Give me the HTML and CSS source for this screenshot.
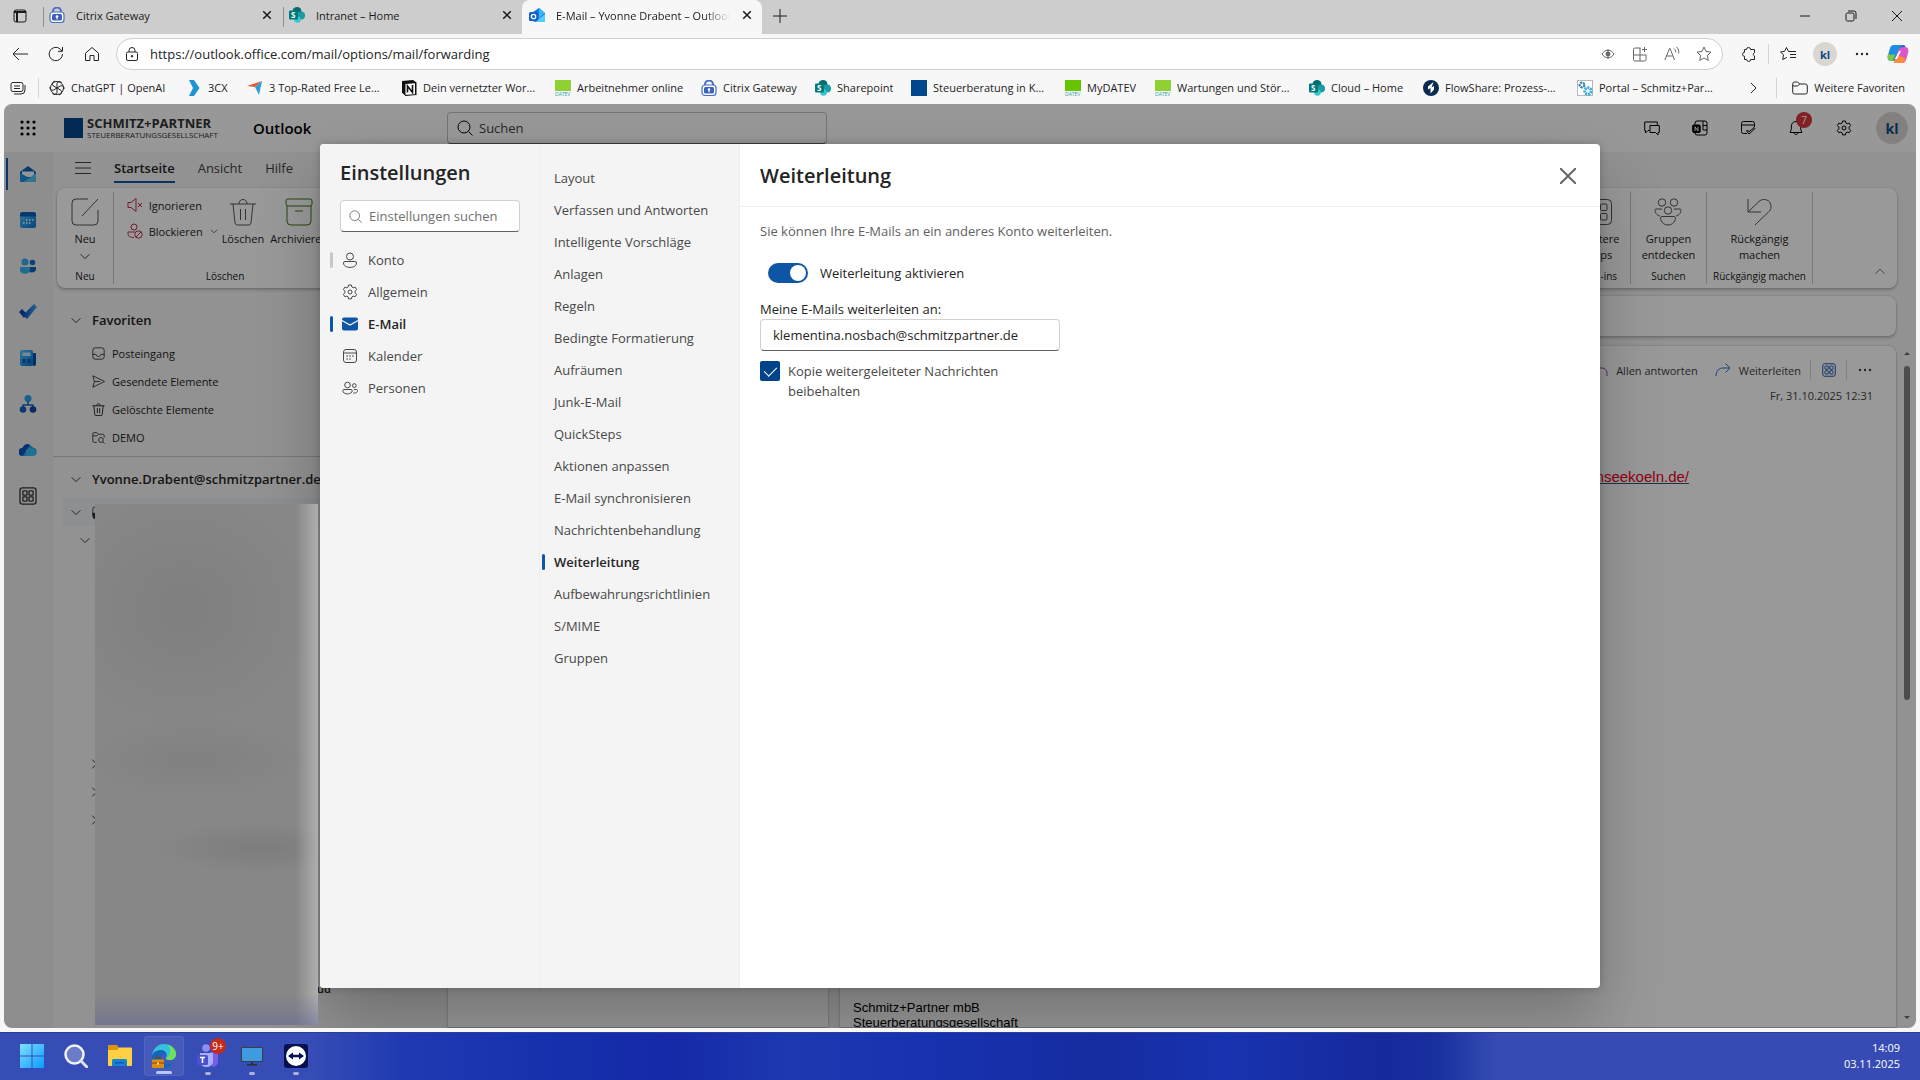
FILE: index.html
```html
<!DOCTYPE html>
<html lang="de">
<head>
    <meta charset="UTF-8">
    <meta name="viewport" content="width=device-width, initial-scale=1.0">
    <title>E-Mail – Yvonne Drabent – Outlook</title>
    <link rel="stylesheet" href="styles.css">
</head>
<body>
    <!-- shared icons -->
    <svg class="sprite" aria-hidden="true">
        <linearGradient id="g-sky" x1="0" y1="0" x2="1" y2="1"><stop offset="0" stop-color="#4fc8ff"/><stop offset="1" stop-color="#0a6fd6"/></linearGradient>
        <linearGradient id="g-deep" x1="0" y1="0" x2="1" y2="0"><stop offset="0" stop-color="#0b53c4"/><stop offset="1" stop-color="#34a8f0"/></linearGradient>
        <symbol id="i-x" viewBox="0 0 16 16"><path d="M3 3l10 10M13 3L3 13"/></symbol>
        <symbol id="i-down" viewBox="0 0 16 16"><path d="M3 6l5 5 5-5"/></symbol>
        <symbol id="i-right" viewBox="0 0 16 16"><path d="M6 3l5 5-5 5"/></symbol>
        <symbol id="i-search" viewBox="0 0 16 16"><circle cx="7" cy="7" r="6"/><path d="M11.500 11.500L15.500 15.500"/></symbol>
        <symbol id="i-gear" viewBox="0 0 16 16"><circle cx="8" cy="8" r="2"/><path d="M6.600 1h2.800l.5 2 1.300.8 2-.6 1.400 2.400-1.500 1.500v1.700l1.500 1.500-1.400 2.400-2-.6-1.300.8-.5 2H6.600l-.5-2-1.300-.8-2 .6-1.400-2.400 1.500-1.500V7.100L1.400 5.600l1.400-2.400 2 .6L6.100 3z" stroke-linejoin="round"/></symbol>
        <symbol id="i-person" viewBox="0 0 16 16"><circle cx="8" cy="4.500" r="3.500"/><path d="M3 9.500h10a1.500 1.500 0 0 1 1.500 1.500c0 2.700-2.600 4.400-6.500 4.400S1.500 13.700 1.500 11A1.500 1.500 0 0 1 3 9.500z"/></symbol>
        <symbol id="i-people" viewBox="0 0 16 16"><circle cx="5.500" cy="5" r="2.800"/><circle cx="12.300" cy="5.600" r="1.900"/><path d="M1.800 9.500h7.400c.6 0 1 .5 1 1 0 2.100-1.900 3.400-4.700 3.400S.8 12.600.8 10.500c0-.5.400-1 1-1zM11.800 9.500h2.700c.6 0 1 .4 1 1 0 1.600-1.200 2.600-3.200 2.600-.4 0-.8 0-1.100-.1"/></symbol>
        <symbol id="i-cal" viewBox="0 0 16 16"><rect x="1.500" y="1.500" width="13" height="13" rx="2.500"/><path d="M1.500 5h13"/><path d="M4.500 8h1.200M7.400 8h1.200M10.300 8h1.200M4.500 11h1.200M7.400 11h1.200" stroke-width="1.500"/></symbol>
        <symbol id="i-trash" viewBox="0 0 28 28"><path d="M1 6h26M10 6c0-6 8-6 8 0M4 6l2 19a2.500 2.500 0 0 0 2.500 2h11a2.500 2.500 0 0 0 2.500-2l2-19M11.500 11v11M16.500 11v11"/></symbol>
        <symbol id="i-apps" viewBox="0 0 28 28"><rect x="1.500" y="1.500" width="25" height="25" rx="4"/><rect x="6" y="6" width="6.500" height="6.500" rx="1"/><rect x="15.500" y="6" width="6.500" height="6.500" rx="1"/><rect x="6" y="15.500" width="6.500" height="6.500" rx="1"/><rect x="15.500" y="15.500" width="6.500" height="6.500" rx="1"/></symbol>
        <symbol id="i-dots" viewBox="0 0 16 16"><g fill="currentColor" stroke="none"><circle cx="3" cy="8" r="1.200"/><circle cx="8" cy="8" r="1.200"/><circle cx="13" cy="8" r="1.200"/></g></symbol>
        <symbol id="i-star" viewBox="0 0 16 16"><path d="M8 1l2.100 4.500 4.900.6-3.600 3.400.9 4.900L8 12l-4.300 2.400.9-4.900L1 6.100l4.900-.6z" stroke-linejoin="round"/></symbol>
        <symbol id="i-citrix" viewBox="0 0 16 16"><path d="M4 6V4.500a4 4 0 0 1 8 0V6" fill="none" stroke="#4a6fc0" stroke-width="2"/><rect x="1" y="5" width="14" height="10.500" rx="3" fill="#fff" stroke="#4a6fc0" stroke-width="1.200"/><rect x="3" y="7" width="10" height="6.500" rx="1.500" fill="#3c62b8"/><circle cx="8" cy="9.500" r="1.300" fill="#fff"/><path d="M7.500 10h1v2.500h-1z" fill="#fff"/></symbol>
        <symbol id="i-sp" viewBox="0 0 16 16"><circle cx="8" cy="4.500" r="4.500" fill="#036c70"/><circle cx="12" cy="8.500" r="4" fill="#1a9ba1"/><circle cx="8.500" cy="12.500" r="3.300" fill="#37c6d0"/><rect y="3.500" width="9" height="9" rx="1" fill="#03787c"/></symbol>
    </svg>

    <header class="titlebar">
        <button class="icon-btn tab-menu" aria-label="Menü für Tabaktionen"><svg class="ic" viewBox="0 0 16 16"><rect x="2" y="2" width="12" height="12" rx="2"/><path d="M2 4h12M5 4v10" stroke-width="2"/></svg></button>
        <div class="tab"><svg class="ic fill"><use href="#i-citrix"/></svg><span class="tab-title">Citrix Gateway</span><button class="tab-close" aria-label="Tab schließen"><svg class="ic"><use href="#i-x"/></svg></button></div>
        <div class="tab"><svg class="ic fill" viewBox="0 0 16 16"><use href="#i-sp"/><text x="2" y="11" class="sp-letter">S</text></svg><span class="tab-title">Intranet – Home</span><button class="tab-close" aria-label="Tab schließen"><svg class="ic"><use href="#i-x"/></svg></button></div>
        <div class="tab active">
            <svg class="ic fill" viewBox="0 0 16 16"><path d="M4 5l6-4 6 5v7a2 2 0 0 1-2 2H6a2 2 0 0 1-2-2z" fill="#1b74e4"/><path d="M10 1l6 5-6 5z" fill="#35b8f5"/><path d="M16 7v6a2 2 0 0 1-2 2H6z" fill="#4fd0ff"/><rect y="5" width="9" height="9" rx="1.500" fill="#0f5fd0"/><circle cx="4.500" cy="9.500" r="2.200" fill="none" stroke="#fff" stroke-width="1.300"/></svg>
            <span class="tab-title">E-Mail – Yvonne Drabent – Outlook</span><button class="tab-close" aria-label="Tab schließen"><svg class="ic"><use href="#i-x"/></svg></button>
        </div>
        <button class="icon-btn" aria-label="Neuer Tab"><svg class="ic" viewBox="0 0 16 16"><path d="M8 1v14M1 8h14"/></svg></button>
        <div class="window-controls">
            <button aria-label="Minimieren"><svg class="ic" viewBox="0 0 16 16"><path d="M3 8h10"/></svg></button>
            <button aria-label="Verkleinern"><svg class="ic" viewBox="0 0 16 16"><rect x="3" y="5" width="8" height="8" rx="1.500"/><path d="M5 3h6a2 2 0 0 1 2 2v6"/></svg></button>
            <button aria-label="Schließen"><svg class="ic"><use href="#i-x"/></svg></button>
        </div>
    </header>

    <div class="toolbar">
        <button class="icon-btn" aria-label="Zurück"><svg class="ic" viewBox="0 0 16 16"><path d="M16 8H1M7 2L1 8l6 6"/></svg></button>
        <button class="icon-btn" aria-label="Aktualisieren"><svg class="ic" viewBox="0 0 16 16"><path d="M14.500 8A6.700 6.700 0 1 1 12 2.800L14 5M14.500 1v4.300H10"/></svg></button>
        <button class="icon-btn" aria-label="Startseite"><svg class="ic" viewBox="0 0 16 16"><path d="M1.500 7.200L8 1.500l6.500 5.700v7.300H10V9.500H6v5H1.500z" stroke-linejoin="round"/></svg></button>
        <div class="address">
            <svg class="ic" viewBox="0 0 16 16"><rect x="2.500" y="6" width="11" height="8.500" rx="1.500"/><path d="M5 6V4.500a3 3 0 0 1 6 0V6"/><circle cx="8" cy="10.200" r=".8" fill="currentColor"/></svg>
            <input type="text" aria-label="Adresse" value="https://outlook.office.com/mail/options/mail/forwarding">
            <div class="address-tools">
                <svg class="ic" viewBox="0 0 16 16"><path d="M2 8c3-5 9-5 12 0-3 5-9 5-12 0z"/><circle cx="8" cy="8" r="2" fill="currentColor"/><path d="M8 3v10"/></svg>
                <svg class="ic" viewBox="0 0 16 16"><path d="M8.500 2H3a1.500 1.500 0 0 0-1.500 1.500v10A1.500 1.500 0 0 0 3 15h9.500a1.500 1.500 0 0 0 1.500-1.500V9H1.500M8 2v13M12.500 1v5M10 3.500h5"/></svg>
                <svg class="ic" viewBox="0 0 16 16"><path d="M.8 14L5.500 2.500h.6L10.500 14M2.500 10h6.300M10 2.500c1.300 1 1.800 2.500 1.500 4M12.500 1c1.900 1.600 2.700 4 2.200 6.500"/></svg>
                <svg class="ic"><use href="#i-star"/></svg>
            </div>
        </div>
        <div class="toolbar-right">
            <button class="icon-btn" aria-label="Erweiterungen"><svg class="ic" viewBox="0 0 16 16"><path d="M5.500 3.500a2 2 0 0 1 4 0h4v3.200a1.800 1.800 0 0 0 0 3.400v3.400H9.700a2 2 0 0 1-4 0H3.500v-3.200a2 2 0 0 1 0-4V3.500z" stroke-linejoin="round"/></svg></button>
            <span class="sep"></span>
            <button class="icon-btn" aria-label="Favoriten"><svg class="ic" viewBox="0 0 16 16"><path d="M11 5.500H8.500L6.500 1.500l-2 3.900-4 .5 3 3-.8 4.600 4-2M10 8.500h6M10 5.500h6M10 11.500h6"/></svg></button>
            <button class="avatar small" aria-label="Profil">kl</button>
            <button class="icon-btn" aria-label="Einstellungen und mehr"><svg class="ic"><use href="#i-dots"/></svg></button>
            <button class="icon-btn" aria-label="Copilot"><svg class="copilot" viewBox="0 0 22 22"><path d="M7 2h8l-4 12c-1 3-2 4-5 4H4c-3 0-4-3-3-6l2-7c.7-2 2-3 4-3z" fill="#1a8fe3"/><path d="M1 11c2 1 5 1 7 0l-2 7H4c-3 0-4-3-3-7z" fill="#7ac943"/><path d="M15 2l3 .5 1 4-7 .5z" fill="#1a55d0"/><path d="M15 20H7l4-12c1-3 2-4 5-4h2c3 0 4 3 3 6l-2 7c-.7 2-2 3-4 3z" fill="#d957c8"/><path d="M7 20l2-7c3-1 7 0 10 4-1 2-2 3-4 3z" fill="#ff8b3d"/><path d="M12 8h2l-4 8H8z" fill="#fff"/></svg></button>
        </div>
    </div>

    <nav class="bookmarks" aria-label="Favoritenleiste">
        <button class="icon-btn" aria-label="Arbeitsbereiche"><svg class="ic" viewBox="0 0 16 16"><rect x="1" y="2.500" width="12" height="9" rx="2"/><path d="M4 6h6M4 8.500h6M15 5v5a4 4 0 0 1-4 4H4"/></svg></button>
        <span class="sep"></span>
        <a href="#" class="w-137"><svg class="ic" viewBox="0 0 16 16"><path d="M8 8V3.500A2.700 2.700 0 0 1 12.700 2.500M8 8l4-2.300a2.700 2.700 0 0 1 3 3.300M8 8l4 2.300a2.700 2.700 0 0 1-2.200 4.500M8 8v4.500a2.700 2.700 0 0 1-4.700 1M8 8l-4 2.300A2.700 2.700 0 0 1 1 7M8 8L4 5.700A2.700 2.700 0 0 1 6.200 1.200"/><circle cx="8" cy="8" r="6.500"/></svg><span>ChatGPT | OpenAI</span></a>
        <a href="#" class="w-61"><svg class="ic fill" viewBox="0 0 16 16"><path d="M3 0h5l5.500 8L8 16H3l4-8z" fill="#1d93d8"/></svg><span>3CX</span></a>
        <a href="#" class="w-154"><svg class="ic fill" viewBox="0 0 16 16"><path d="M0 6l15-5-7 6z" fill="#e8582a"/><path d="M15 1l-3 14-4-8z" fill="#2a9fd8"/></svg><span>3 Top-Rated Free Leads</span></a>
        <a href="#" class="w-154"><svg class="ic fill" viewBox="0 0 16 16"><path d="M1 1l11-1 3.500 2.500V15l-11 1L1 12.500z" fill="#111"/><path d="M4.500 4L14 3.300v10.900l-9.500.6z" fill="#fff"/><path d="M6.500 12.500V6l5 6.500V5" fill="none" stroke="#111" stroke-width="1.600"/></svg><span>Dein vernetzter Workspace</span></a>
        <a href="#" class="w-146"><svg class="ic fill" viewBox="0 0 16 16"><path d="M0 0h16v11H0z" fill="#8fd032"/><text x="0" y="16" class="datev">DATEV</text></svg><span>Arbeitnehmer online</span></a>
        <a href="#" class="w-114"><svg class="ic fill"><use href="#i-citrix"/></svg><span>Citrix Gateway</span></a>
        <a href="#" class="w-96"><svg class="ic fill" viewBox="0 0 16 16"><use href="#i-sp"/><text x="2" y="11" class="sp-letter">S</text></svg><span>Sharepoint</span></a>
        <a href="#" class="w-154"><svg class="ic fill" viewBox="0 0 16 16"><path d="M0 0h16v16H0z" fill="#00468c"/></svg><span>Steuerberatung in Köln</span></a>
        <a href="#" class="w-90"><svg class="ic fill" viewBox="0 0 16 16"><path d="M0 0h16v11H0z" fill="#68c400"/><text x="0" y="16" class="datev">DATEV</text></svg><span>MyDATEV</span></a>
        <a href="#" class="w-154"><svg class="ic fill" viewBox="0 0 16 16"><path d="M0 0h16v11H0z" fill="#8fd032"/><text x="0" y="16" class="datev">DATEV</text></svg><span>Wartungen und Störungen</span></a>
        <a href="#" class="w-114"><svg class="ic fill" viewBox="0 0 16 16"><use href="#i-sp"/><text x="2" y="11" class="sp-letter">S</text></svg><span>Cloud – Home</span></a>
        <a href="#" class="w-154"><svg class="ic fill" viewBox="0 0 16 16"><circle cx="8" cy="8" r="8" fill="#0a2a52"/><path d="M10.500 2L5 6.500v3L7.500 8v5.500l3.500-4V6L8.500 7.500z" fill="#fff"/></svg><span>FlowShare: Prozess-Doku</span></a>
        <a href="#" class="w-154"><svg class="ic fill" viewBox="0 0 16 16"><rect x=".5" y=".5" width="15" height="15" fill="#fff" stroke="#b8b8b8"/><circle cx="5" cy="5" r="2.400" fill="none" stroke="#1a7aa8" stroke-width="2" stroke-dasharray="2 .8"/><circle cx="11" cy="11" r="3.200" fill="none" stroke="#38a9e0" stroke-width="3" stroke-dasharray="2 .8"/></svg><span>Portal – Schmitz+Partner</span></a>
        <div class="bookmarks-end">
            <button class="icon-btn" aria-label="Weitere anzeigen"><svg class="ic"><use href="#i-right"/></svg></button>
            <span class="sep"></span>
            <a href="#"><svg class="ic" viewBox="0 0 16 16"><path d="M.7 4a2 2 0 0 1 2-2h3l2 2h5.600a2 2 0 0 1 2 2v6a2 2 0 0 1-2 2H2.700a2 2 0 0 1-2-2zM.7 6h5l2-2"/></svg><span>Weitere Favoriten</span></a>
        </div>
    </nav>

    <div class="page">
        <div class="suite-header">
            <button class="waffle" aria-label="App-Startfeld"><svg class="ic fill" viewBox="0 0 16 16"><g fill="#000"><circle cx="2" cy="2" r="1.600"/><circle cx="8" cy="2" r="1.600"/><circle cx="14" cy="2" r="1.600"/><circle cx="2" cy="8" r="1.600"/><circle cx="8" cy="8" r="1.600"/><circle cx="14" cy="8" r="1.600"/><circle cx="2" cy="14" r="1.600"/><circle cx="8" cy="14" r="1.600"/><circle cx="14" cy="14" r="1.600"/></g></svg></button>
            <div class="brand">
                <span class="brand-mark"></span>
                <span class="brand-text"><b>SCHMITZ+PARTNER</b><small>STEUERBERATUNGSGESELLSCHAFT</small></span>
            </div>
            <span class="app-name">Outlook</span>
            <label class="suite-search"><svg class="ic"><use href="#i-search"/></svg><input type="text" aria-label="Suchen" placeholder="Suchen"></label>
            <div class="suite-tools">
                <button aria-label="Teams-Chat"><svg class="ic" viewBox="0 0 16 16"><path d="M5.500 10.500H4L1.500 13v-2.500H.7V2h12.600v3M6 5.500h9.300v7H14V15l-2.500-2.500H6z"/></svg></button>
                <button aria-label="OneNote"><svg class="ic" viewBox="0 0 16 16"><rect x="3" y="1" width="12" height="14" rx="2"/><path d="M11 5.500h4M11 10h4M11 1v9"/><rect x=".7" y="5" width="7.500" height="7.500" rx="1" fill="currentColor"/><path d="M3 11V6.800L6 11V6.800" stroke="#fff"/></svg></button>
                <button aria-label="Mein Tag"><svg class="ic" viewBox="0 0 16 16"><path d="M7 13.500H3.500a2 2 0 0 1-2-2v-8a2 2 0 0 1 2-2h9a2 2 0 0 1 2 2V7M1.500 5h13M6.500 11l2.500 3 6-5.500-1-1-5 4.300-1.500-1.800z"/></svg></button>
                <button aria-label="Benachrichtigungen" class="bell"><svg class="ic" viewBox="0 0 16 16"><path d="M8 1.500A4.700 4.700 0 0 0 3.300 6v3.500L2 12.500h12l-1.300-3V6A4.700 4.700 0 0 0 8 1.500zM6 12.500c0 2.700 4 2.700 4 0"/></svg><span class="badge">7</span></button>
                <button aria-label="Einstellungen"><svg class="ic"><use href="#i-gear"/></svg></button>
                <button class="avatar" aria-label="Konto">kl</button>
            </div>
        </div>

        <div class="workspace">
            <nav class="rail" aria-label="Apps">
                <a href="#" class="active" aria-label="E-Mail"><svg viewBox="0 0 18 18"><path d="M1 7l8-6 8 6v8a2 2 0 0 1-2 2H3a2 2 0 0 1-2-2z" fill="#0f5fb8"/><path d="M3 6.500h12V12H3z" fill="#f4fbff"/><path d="M1 8l16 8.500a2 2 0 0 1-2 .5H3a2 2 0 0 1-2-2z" fill="#1f8fe0"/><path d="M17 8L5 17h10a2 2 0 0 0 2-2z" fill="#4cc6f2"/></svg></a>
                <a href="#" aria-label="Kalender"><svg viewBox="0 0 18 18"><rect x="1" y="1" width="16" height="16" rx="2.500" fill="url(#g-sky)"/><path d="M1 5.500v-2A2.500 2.500 0 0 1 3.500 1h11A2.500 2.500 0 0 1 17 3.500v2z" fill="#0a5fb8"/><path d="M7 9h1.500M10 9h1.500M13 9h1.500M4 12h1.500M7 12h1.500M10 12h1.500" stroke="#fff" stroke-width="1.500"/></svg></a>
                <a href="#" aria-label="Personen"><svg viewBox="0 0 18 18"><circle cx="6" cy="5" r="3.600" fill="#34b0f2"/><circle cx="13.500" cy="5.500" r="2.800" fill="#0f6fd0"/><path d="M10 10h7v2c0 3-3 4-7 3z" fill="#0f62c0"/><path d="M1 10h10v3c0 5-10 5-10 0z" fill="#36b4f2"/></svg></a>
                <a href="#" aria-label="To Do"><svg viewBox="0 0 18 18"><path d="M0 9l3-3 5 5-3 4z" fill="#0d47a0"/><path d="M4 12L15 1l3 3L8 16z" fill="url(#g-deep)"/></svg></a>
                <a href="#" aria-label="Newsletter"><svg viewBox="0 0 18 18"><path d="M13 4h3a1 1 0 0 1 1 1v10a2 2 0 0 1-4 0z" fill="#0b4fa8"/><rect x="1" y="1" width="13" height="16" rx="2" fill="url(#g-sky)"/><path d="M3.500 3.500h8V7h-8z" fill="#bfe8ff"/><path d="M3.500 10h3v4h-3zM8.500 10h3v4h-3z" fill="#0a5cb0"/></svg></a>
                <a href="#" aria-label="Organigramm"><svg viewBox="0 0 18 18"><circle cx="9" cy="3.500" r="3.500" fill="#2ba2ea"/><path d="M9 6v4M4 14v-4h10v4" fill="none" stroke="#1668b8" stroke-width="1.500"/><circle cx="4" cy="14.500" r="3.300" fill="#1060c0"/><circle cx="14" cy="14.500" r="3.300" fill="#0a48a0"/></svg></a>
                <a href="#" aria-label="OneDrive"><svg viewBox="0 0 18 18"><path d="M4 15a4 4 0 0 1-.5-8A6 6 0 0 1 14 6.500a4.300 4.300 0 0 1 0 8.500z" fill="#22a4f0"/><path d="M3.500 15a4 4 0 0 1 0-8C5 3 9 2 11 4z" fill="#0c50c0"/><path d="M7 9c3-3 8-2 9 0 2 3 0 6-2 6H7z" fill="#3cc0f4" opacity=".8"/></svg></a>
                <a href="#" aria-label="Weitere Apps"><svg class="line"><use href="#i-apps"/></svg></a>
            </nav>

            <div class="main">
                <div class="ribbon-tabs">
                    <button class="menu-btn" aria-label="Navigationsbereich"><svg class="ic" viewBox="0 0 16 16"><path d="M0 2.500h16M0 8h16M0 13.500h16"/></svg></button>
                    <a href="#" class="active">Startseite</a><a href="#">Ansicht</a><a href="#">Hilfe</a>
                </div>

                <section class="ribbon card">
                    <div class="ribbon-group g-new">
                        <div class="ribbon-row"><button class="big"><svg class="ic28" viewBox="0 0 28 28"><path d="M17 1H5a4 4 0 0 0-4 4v18a4 4 0 0 0 4 4h18a4 4 0 0 0 4-4V12M11 18L27 1"/></svg>Neu<svg class="ic14"><use href="#i-down"/></svg></button></div>
                        <span class="caption">Neu</span>
                    </div>
                    <div class="ribbon-group g-delete">
                        <div class="ribbon-row">
                            <div class="stack">
                                <button><svg class="ic red" viewBox="0 0 16 16"><path d="M1 5.500h3L9 1.500v13l-5-4H1zM11 6l4 4M15 6l-4 4"/></svg>Ignorieren</button>
                                <button><svg class="ic red" viewBox="0 0 16 16"><circle cx="7" cy="4" r="3"/><path d="M7 14.500c-4 0-6-1.500-6-4V9h7"/><circle cx="11.500" cy="11.500" r="3.700"/><path d="M9 14l5-5"/></svg>Blockieren<svg class="ic10"><use href="#i-down"/></svg></button>
                            </div>
                            <button class="big"><svg class="ic28"><use href="#i-trash"/></svg>Löschen</button>
                            <button class="big"><svg class="ic28 leaf" viewBox="0 0 28 28"><rect x="1" y="1" width="26" height="7" rx="2"/><path d="M2 8v15a4 4 0 0 0 4 4h16a4 4 0 0 0 4-4V8M10 13h8"/></svg>Archivieren</button>
                        </div>
                        <span class="caption">Löschen</span>
                    </div>
                    <div class="ribbon-fill"></div>
                    <div class="ribbon-group g-addins">
                        <div class="ribbon-row"><button class="big"><svg class="ic28"><use href="#i-apps"/></svg>Weitere<br>Apps</button></div>
                        <span class="caption">Add-ins</span>
                    </div>
                    <div class="ribbon-group g-groups">
                        <div class="ribbon-row"><button class="big"><svg class="ic28" viewBox="0 0 28 28"><circle cx="8" cy="4.500" r="3.700"/><circle cx="20" cy="4.500" r="3.700"/><circle cx="14" cy="12.500" r="3.700"/><path d="M8 11H2c-2 0-1 6 4 7M20 11h6c2 0 1 6-4 7M7.500 18.500h13c2 0 1 8.500-6.500 8.500s-8.500-8.500-6.500-8.500z"/></svg>Gruppen<br>entdecken</button></div>
                        <span class="caption">Suchen</span>
                    </div>
                    <div class="ribbon-group g-undo">
                        <div class="ribbon-row"><button class="big"><svg class="ic28" viewBox="0 0 28 28"><path d="M3 1v13h13M3 14L14 3.500c4-4 12-2 12 5 0 3-1 4-3 6L10 27"/></svg>Rückgängig<br>machen</button></div>
                        <span class="caption">Rückgängig machen</span>
                    </div>
                    <button class="collapse" aria-label="Menüband reduzieren"><svg class="ic10" viewBox="0 0 16 16"><path d="M1 12l7-7 7 7"/></svg></button>
                </section>

                <div class="panes">
                    <aside class="folders">
                        <h2><svg class="ic14"><use href="#i-down"/></svg>Favoriten</h2>
                        <ul class="favorites">
                            <li><svg class="ic12" viewBox="0 0 16 16"><rect x="1" y="1" width="14" height="14" rx="3"/><path d="M1 9h4c.5 3.500 5.500 3.500 6 0h4"/></svg>Posteingang</li>
                            <li><svg class="ic12" viewBox="0 0 16 16"><path d="M1 1l14.500 7L1 15l2-7zM3 8h7" stroke-linejoin="round"/></svg>Gesendete Elemente</li>
                            <li><svg class="ic12 bold"><use href="#i-trash"/></svg>Gelöschte Elemente</li>
                            <li><svg class="ic12" viewBox="0 0 16 16"><path d="M6 14H3a2 2 0 0 1-2-2V3.500A1.500 1.500 0 0 1 2.500 2H6l2 2h5a2 2 0 0 1 2 2v2M1 6h5l2-2"/><circle cx="11" cy="11" r="3"/><path d="M13 13l2.500 2.500"/></svg>DEMO</li>
                        </ul>
                        <h2 class="account"><svg class="ic14"><use href="#i-down"/></svg>Yvonne.Drabent@schmitzpartner.de</h2>
                        <ul class="tree">
                            <li class="selected"><svg class="ic14"><use href="#i-down"/></svg><svg class="ic12" viewBox="0 0 16 16"><rect x="1" y="1" width="14" height="14" rx="3"/><path d="M1 9h4c.5 3.500 5.500 3.500 6 0h4v6H2z" fill="currentColor"/></svg></li>
                            <li class="level-1"><svg class="ic14"><use href="#i-down"/></svg></li>
                            <li class="gap"></li>
                            <li class="level-2"><svg class="ic14"><use href="#i-right"/></svg></li>
                            <li class="level-2"><svg class="ic14"><use href="#i-right"/></svg></li>
                            <li class="level-2"><svg class="ic14"><use href="#i-right"/></svg></li>
                            <li class="gap-small"></li>
                            <li class="long-name">ud</li>
                        </ul>
                    </aside>

                    <div class="mail">
                        <div class="notice card"></div>
                        <div class="mail-panes">
                            <section class="message-list card"></section>
                            <article class="reading card">
                                <div class="actions">
                                    <button><svg class="ic purple" viewBox="0 0 16 16"><path d="M5 2L1 6l4 4M8 2L4 6l4 4M4 6h6a5 5 0 0 1 5 5v3"/></svg>Allen antworten</button>
                                    <button><svg class="ic blue" viewBox="0 0 16 16"><path d="M10.500 1.500L15 6l-4.500 4.500M15 6H8c-4 0-7 3-7 8"/></svg>Weiterleiten</button>
                                    <span class="sep"></span>
                                    <button aria-label="Apps"><svg class="ic14 navy"><use href="#i-apps"/></svg></button>
                                    <span class="sep"></span>
                                    <button aria-label="Weitere Aktionen"><svg class="ic"><use href="#i-dots"/></svg></button>
                                </div>
                                <time>Fr, 31.10.2025 12:31</time>
                                <p class="mail-link"><a href="#">amseekoeln.de/</a></p>
                                <p class="signature">Schmitz+Partner mbB<br>Steuerberatungsgesellschaft</p>
                            </article>
                        </div>
                        <div class="scrollbar"><i class="arrow-up"></i><i class="thumb"></i><i class="arrow-down"></i></div>
                    </div>
                </div>
            </div>
        </div>

        <div class="overlay">
            <div class="dialog" role="dialog" aria-modal="true" aria-labelledby="dialog-title">
                <nav class="categories">
                    <h1 id="dialog-title">Einstellungen</h1>
                    <label class="settings-search"><svg class="ic12"><use href="#i-search"/></svg><input type="text" aria-label="Einstellungen suchen" placeholder="Einstellungen suchen"></label>
                    <a href="#" class="hover"><svg class="ic"><use href="#i-person"/></svg>Konto</a>
                    <a href="#"><svg class="ic"><use href="#i-gear"/></svg>Allgemein</a>
                    <a href="#" class="active"><svg class="ic fill" viewBox="0 0 16 16"><rect y="1.500" width="16" height="13" rx="2" fill="#0f55a5"/><path d="M0 4.500l8 4.500 8-4.500" fill="none" stroke="#f4f4f4" stroke-width="1.200"/></svg>E-Mail</a>
                    <a href="#"><svg class="ic"><use href="#i-cal"/></svg>Kalender</a>
                    <a href="#"><svg class="ic"><use href="#i-people"/></svg>Personen</a>
                </nav>
                <nav class="subcategories">
                    <a href="#">Layout</a>
                    <a href="#">Verfassen und Antworten</a>
                    <a href="#">Intelligente Vorschläge</a>
                    <a href="#">Anlagen</a>
                    <a href="#">Regeln</a>
                    <a href="#">Bedingte Formatierung</a>
                    <a href="#">Aufräumen</a>
                    <a href="#">Junk-E-Mail</a>
                    <a href="#">QuickSteps</a>
                    <a href="#">Aktionen anpassen</a>
                    <a href="#">E-Mail synchronisieren</a>
                    <a href="#">Nachrichtenbehandlung</a>
                    <a href="#" class="active">Weiterleitung</a>
                    <a href="#">Aufbewahrungsrichtlinien</a>
                    <a href="#">S/MIME</a>
                    <a href="#">Gruppen</a>
                </nav>
                <section class="settings">
                    <div class="settings-head"><h2>Weiterleitung</h2><button aria-label="Schließen"><svg viewBox="0 0 16 16"><path d="M0 0l16 16M16 0L0 16"/></svg></button></div>
                    <form class="settings-body">
                        <p>Sie können Ihre E-Mails an ein anderes Konto weiterleiten.</p>
                        <label class="switch"><input type="checkbox" role="switch" checked>Weiterleitung aktivieren</label>
                        <label class="field-label" for="forward-to">Meine E-Mails weiterleiten an:</label>
                        <input class="field" id="forward-to" type="text" value="klementina.nosbach@schmitzpartner.de">
                        <label class="check"><input type="checkbox" checked><span>Kopie weitergeleiteter Nachrichten beibehalten</span></label>
                    </form>
                </section>
            </div>
        </div>
        <div class="folder-blur"></div>
    </div>

    <footer class="taskbar">
        <button aria-label="Start"><svg viewBox="0 0 24 24"><path d="M0 0h11.500v11.500H0zM12.500 0H24v11.500H12.500zM0 12.500h11.500V24H0zM12.500 12.500H24V24H12.500z" fill="url(#g-win)"/><linearGradient id="g-win" x1="0" y1="0" x2="1" y2="1"><stop offset="0" stop-color="#7fe0ff"/><stop offset="1" stop-color="#0a9bff"/></linearGradient></svg></button>
        <button aria-label="Suche"><svg viewBox="0 0 24 24"><circle cx="10.500" cy="10.500" r="9" fill="#6d7cc8" stroke="#f2f2f8" stroke-width="2.500"/><path d="M17 17l6 6" stroke="#e0e0ea" stroke-width="3" stroke-linecap="round"/></svg></button>
        <button aria-label="Explorer"><svg viewBox="0 0 24 24"><path d="M0 2a1 1 0 0 1 1-1h8l2 3-2 3H0z" fill="#d9960a"/><path d="M0 6h9l2-2.500h12a1 1 0 0 1 1 1V21a1 1 0 0 1-1 1H1a1 1 0 0 1-1-1z" fill="#ffd044"/><path d="M4 22v-5.500A1.500 1.500 0 0 1 5.500 15h12a1.500 1.500 0 0 1 1.500 1.500V22z" fill="#1384d8"/><path d="M7 18h9v1.500H7z" fill="#0b5ba8"/></svg></button>
        <button aria-label="Edge" class="current running"><svg viewBox="0 0 24 24"><path d="M0 12C1 4 6 0 12 0c7 0 12 5 12 10 0 4-3 6-6 6-3 0-4-1-4-2 1-1 2-6-4-7-5 0-9 2-10 5z" fill="#35c2dd"/><path d="M16 1c5 1 8 5 8 9 0 4-3 6-6 6-3 0-4-1-4-2 4-2 6-8 2-13z" fill="#6fe05a"/><path d="M0 12c1-4 5-6 9-6 4 0 6 3 5.500 6C13 9 9 10 9 14c0 5 7 8 13 4-2 4-6 6-10 6C5 24 0 19 0 12z" fill="#1467b8"/><rect y="15.500" width="12" height="8.500" rx="1" fill="#e08c10"/><path d="M4 15v-1.500h4V15M0 19h12" fill="none" stroke="#7a4300" stroke-width="1.200"/><path d="M5 18.500h2v2H5z" fill="#ffe08a"/></svg></button>
        <button aria-label="Teams" class="running"><svg viewBox="0 0 24 24"><circle cx="10" cy="4" r="3.800" fill="#8f8cf5"/><path d="M14 8h8v9c0 4-3 6-6 6z" fill="#7b5bea"/><path d="M4 9h13v8c0 8-13 8-13 0z" fill="#a5b0fa"/><rect x="1" y="11" width="11" height="10" rx="1.500" fill="#4b50d0"/><path d="M4 13.500h5M6.500 13.500V19" stroke="#fff" stroke-width="1.600"/></svg><span class="count">9+</span></button>
        <button aria-label="Remotedesktop" class="running"><svg viewBox="0 0 24 24"><rect x="1" y="3" width="22" height="15" rx="1" fill="#3a3f46"/><rect x="2" y="4" width="20" height="13" fill="#3f9be0"/><path d="M11 18h2v2h4v1.500H7V20h4z" fill="#2c3036"/></svg></button>
        <button aria-label="TeamViewer" class="running"><svg viewBox="0 0 24 24"><rect width="24" height="24" rx="3" fill="#04104f"/><circle cx="12" cy="12" r="10" fill="#fff"/><path d="M4 12l5-3.500v2.300h6V8.500l5 3.500-5 3.500v-2.300H9v2.300z" fill="#04104f"/></svg></button>
        <div class="clock"><span>14:09</span><span>03.11.2025</span></div>
    </footer>
</body>
</html>
```

FILE: styles.css
```css
:root {
    --accent: #0f55a5;
    --chrome: #f7f7f7;
    --text: #242424;
    --text-soft: #484848;
    --line: #d6d6d6;
}

* {
    box-sizing: border-box;
}

body {
    margin: 0;
    height: 100vh;
    display: flex;
    flex-direction: column;
    overflow: hidden;
    background: var(--chrome);
    color: var(--text);
    font-family: "Open Sans", "Noto Sans", sans-serif;
    font-size: 11px;
}

button {
    font: inherit;
    color: inherit;
    background: none;
    border: 0;
    padding: 0;
    display: flex;
    align-items: center;
    justify-content: center;
}

input {
    font: inherit;
    color: inherit;
    border: 0;
    padding: 0;
    background: none;
    min-width: 0;
    outline: none;
}

a {
    color: inherit;
    text-decoration: none;
}

h1, h2, p, ul {
    margin: 0;
    padding: 0;
    list-style: none;
}

svg {
    flex: none;
    fill: none;
    stroke: currentColor;
}

.sprite {
    position: absolute;
    width: 0;
    height: 0;
}

.fill, .rail svg, .taskbar svg, .copilot {
    stroke: none;
}

.rail svg.line {
    stroke: #333;
    stroke-width: 2;
}

.ic { width: 16px; height: 16px; }
.ic28 { width: 28px; height: 28px; }
.ic14 { width: 14px; height: 14px; }
.ic12 { width: 13px; height: 13px; }
.ic10 { width: 10px; height: 10px; }

.bold { stroke-width: 2; }

.sp-letter {
    font-size: 8px;
    font-weight: 700;
    fill: #fff;
}

.datev {
    font-size: 5px;
    fill: #1ea39a;
}

.sep {
    width: 1px;
    height: 20px;
    background: var(--line);
    flex: none;
}

.icon-btn {
    width: 36px;
    height: 32px;
    flex: none;
}

/* browser tabs */

.titlebar {
    height: 34px;
    flex: none;
    display: flex;
    background: #cdcdcd;
    color: #1a1a1a;
}

.tab-menu {
    margin: 0 4px 0 2px;
}

.tab {
    width: 240px;
    display: flex;
    align-items: center;
    gap: 11px;
    padding: 0 9px 4px 7px;
    height: 34px;
    position: relative;
}

.tab:not(.active)::before {
    content: "";
    position: absolute;
    left: 1px;
    top: 7px;
    height: 20px;
    border-left: 1px solid #8f8f8f;
}

.tab.active {
    background: var(--chrome);
    border-radius: 8px 8px 0 0;
}

.tab-title {
    flex: 1;
    overflow: hidden;
    white-space: nowrap;
}

.tab.active .tab-title {
    mask-image: linear-gradient(to right, #000 85%, transparent);
}

.tab-close .ic {
    width: 12px;
    height: 12px;
    stroke-width: 2;
}

.window-controls {
    margin-left: auto;
    display: flex;
}

.window-controls button {
    width: 46px;
    height: 32px;
}

/* address row */

.toolbar {
    height: 38px;
    flex: none;
    display: flex;
    align-items: center;
    padding: 2px 0 0 2px;
}

.address {
    flex: 1;
    height: 32px;
    margin-left: 6px;
    padding: 0 10px 0 7px;
    display: flex;
    align-items: center;
    gap: 10px;
    background: #fff;
    border: 1px solid #cfcfcf;
    border-radius: 16px;
}

.address input {
    flex: 1;
    font-size: 13px;
}

.address-tools {
    display: flex;
    gap: 16px;
    color: #666;
}

.toolbar-right {
    display: flex;
    align-items: center;
    padding: 0 4px 0 8px;
}

.toolbar-right .sep {
    margin: 0 1px;
}

.copilot {
    width: 22px;
    height: 22px;
}

.avatar {
    width: 32px;
    height: 32px;
    border-radius: 50%;
    background: #dad6d2;
    color: #0d4a8a;
    font-size: 14px;
    font-weight: 700;
}

.avatar.small {
    width: 24px;
    height: 24px;
    margin: 0 7px;
    font-size: 11px;
}

/* favourites row */

.bookmarks {
    height: 32px;
    flex: none;
    display: flex;
    align-items: center;
    padding-bottom: 1px;
}

.bookmarks > .sep {
    margin: 0 10px 0 2px;
}

.bookmarks a {
    display: flex;
    align-items: center;
    gap: 6px;
}

.bookmarks a span {
    overflow: hidden;
    text-overflow: ellipsis;
    white-space: nowrap;
}

.bookmarks > a {
    padding-right: 16px;
}

.w-61 { width: 61px; }
.w-90 { width: 90px; }
.w-96 { width: 96px; }
.w-114 { width: 114px; }
.w-137 { width: 137px; }
.w-146 { width: 146px; }
.w-154 { width: 154px; }

.bookmarks-end {
    margin-left: auto;
    display: flex;
    align-items: center;
    gap: 5px;
    padding-right: 15px;
}

.bookmarks-end a {
    margin-left: 10px;
}

/* outlook */

.page {
    flex: 1;
    min-height: 0;
    margin: 0 4px 4px;
    position: relative;
    display: flex;
    flex-direction: column;
    overflow: hidden;
    border-radius: 8px;
    background: #f3f3f3;
}

.suite-header {
    height: 48px;
    flex: none;
    display: flex;
    align-items: center;
    background: #fdfdfd;
    color: #000;
}

.waffle {
    width: 48px;
    height: 48px;
}

.brand {
    display: flex;
    align-items: center;
    gap: 4px;
    margin-left: 12px;
    width: 189px;
}

.brand-mark {
    width: 19px;
    height: 20px;
    background: #00468c;
}

.brand-text {
    display: flex;
    flex-direction: column;
    color: #333;
}

.brand-text b {
    font-size: 13px;
    line-height: 13px;
}

.brand-text small {
    font-size: 8px;
    line-height: 9px;
}

.app-name {
    font-size: 15px;
    font-weight: 600;
    width: 194px;
}

.suite-search {
    width: 380px;
    height: 32px;
    display: flex;
    align-items: center;
    gap: 6px;
    padding: 0 9px;
    border: 1px solid #c4c4c4;
    border-bottom-color: #616161;
    border-radius: 4px;
    font-size: 13px;
}

.suite-search input {
    flex: 1;
}

.suite-search input::placeholder {
    color: #424242;
}

.suite-tools {
    margin-left: auto;
    display: flex;
    align-items: center;
    padding-right: 8px;
}

.suite-tools button:not(.avatar) {
    width: 48px;
    height: 48px;
}

.suite-tools .avatar {
    margin-left: 8px;
}

.bell {
    position: relative;
}

.badge {
    position: absolute;
    top: 8px;
    right: 8px;
    width: 16px;
    height: 16px;
    border-radius: 50%;
    background: #d9363c;
    color: #fff;
    font-size: 10px;
    line-height: 16px;
}

.workspace {
    flex: 1;
    min-height: 0;
    display: flex;
}

.rail {
    width: 49px;
    flex: none;
    padding-top: 6px;
    background: #ededed;
}

.rail a {
    height: 32px;
    margin: 0 0 14px 2px;
    padding-right: 4px;
    display: flex;
    align-items: center;
    justify-content: center;
}

.rail a.active {
    border-left: 2px solid var(--accent);
    padding-right: 6px;
}

.rail svg {
    width: 18px;
    height: 18px;
}

.main {
    flex: 1;
    min-width: 0;
    display: flex;
    flex-direction: column;
}

.ribbon-tabs {
    height: 36px;
    flex: none;
    display: flex;
    gap: 23px;
    padding-left: 22px;
    font-size: 13px;
    color: #424242;
}

.ribbon-tabs > * {
    height: 31px;
    line-height: 32px;
}

.ribbon-tabs .active {
    color: var(--text);
    font-weight: 600;
    border-bottom: 2px solid var(--accent);
}

.card {
    background: #fff;
    border-radius: 8px;
    box-shadow: 0 0 2px rgba(0, 0, 0, .2), 0 2px 3px rgba(0, 0, 0, .2);
}

.ribbon {
    height: 100px;
    flex: none;
    margin: 0 19px 0 4px;
    padding: 4px 0;
    display: flex;
}

.ribbon-group {
    display: flex;
    flex-direction: column;
    align-items: center;
    justify-content: space-between;
    border-right: 1px solid #c8c8c8;
}

.ribbon-row {
    display: flex;
}

.g-new { width: 57px; }
.g-delete { width: 226px; padding-right: 3px; }
.g-addins { width: 66px; padding-left: 4px; }
.g-groups { width: 76px; }
.g-undo { width: 106px; }

.ribbon-fill {
    flex: 1;
}

.big {
    flex-direction: column;
    justify-content: flex-start;
    padding: 6px 3px 0;
    line-height: 16px;
}

.big .ic28 {
    margin-bottom: 5px;
    color: #555;
}

.big .ic14 {
    margin-top: 2px;
}

.stack {
    padding-left: 8px;
}

.stack button {
    height: 26px;
    gap: 6px;
}

.ribbon .red { color: #b8344e; }
.ribbon .leaf { color: #3a7a10; }

.caption {
    font-size: 10px;
    line-height: 16px;
    white-space: nowrap;
}

.collapse {
    width: 84px;
    padding: 65px 0 0 50px;
}

.panes {
    flex: 1;
    min-height: 0;
    display: flex;
    padding-top: 8px;
}

.folders {
    width: 395px;
    flex: none;
    overflow: hidden;
    padding-top: 10px;
}

.folders h2 {
    height: 28px;
    display: flex;
    align-items: center;
    gap: 9px;
    padding-left: 16px;
    font-size: 13px;
    font-weight: 600;
}

.folders li {
    height: 28px;
    display: flex;
    align-items: center;
    gap: 7px;
}

.favorites {
    padding: 5px 0;
    border-bottom: 1px solid #c8c8c8;
}

.favorites li {
    padding-left: 39px;
}

.folders .account {
    margin-top: 8px;
}

.tree {
    padding: 5px 0 0 9px;
}

.tree li {
    gap: 9px;
    padding-left: 7px;
}

.tree .selected {
    background: #eaf0f5;
}

.tree .level-1 { padding-left: 16px; }
.tree .level-2 { padding-left: 25px; }
.tree .gap { height: 196px; }
.tree .gap-small { height: 140px; }

.tree .long-name {
    padding-left: 255px;
    font-weight: 600;
}

.mail {
    flex: 1;
    min-width: 0;
    position: relative;
    display: flex;
    flex-direction: column;
    gap: 10px;
    padding: 0 20px 1px 0;
}

.notice {
    height: 40px;
    flex: none;
}

.mail-panes {
    flex: 1;
    min-height: 0;
    display: flex;
    gap: 12px;
}

.message-list {
    width: 380px;
    flex: none;
    border-radius: 8px 8px 0 0;
}

.reading {
    flex: 1;
    overflow: hidden;
    display: flex;
    flex-direction: column;
    padding: 9px 23px 0 13px;
    border-radius: 8px 8px 0 0;
}

.reading > * {
    flex: none;
}

.actions {
    height: 30px;
    display: flex;
    align-items: center;
    justify-content: flex-end;
    gap: 9px;
    color: #424242;
}

.actions button {
    gap: 8px;
    margin-left: 8px;
}

.actions .sep + button {
    margin: 0;
    width: 17px;
}

.purple { color: #9b45b2; }
.blue { color: #2a6fc0; }
.navy { color: #1a5aa8; stroke-width: 2; }

.reading time {
    align-self: flex-end;
    margin-top: 3px;
    line-height: 16px;
    color: #424242;
}

.mail-link {
    margin-top: 63px;
    padding-right: 184px;
    text-align: right;
    font: 15px/20px "Liberation Sans", Arial, sans-serif;
}

.mail-link a {
    color: #f0001a;
    text-decoration: underline;
    text-decoration-color: #2a5a70;
}

.signature {
    margin-top: 513px;
    font: 13px/15px "Liberation Sans", Arial, sans-serif;
    color: #000;
}

/* scroll strip to the right of the reading pane */
.scrollbar {
    position: absolute;
    top: 50px;
    right: 6px;
    bottom: 0;
    width: 6px;
}

.scrollbar i {
    position: absolute;
    left: 0;
}

.arrow-up, .arrow-down {
    border: 3px solid transparent;
}

.arrow-up {
    top: 3px;
    border-bottom-color: #6a6a6a;
}

.arrow-down {
    bottom: 6px;
    border-top-color: #6a6a6a;
}

.thumb {
    top: 20px;
    width: 6px;
    height: 49%;
    border-radius: 3px;
    background: #808080;
}

/* settings dialog */

.overlay {
    position: absolute;
    inset: 0;
    display: flex;
    justify-content: center;
    padding: 40px;
    background: rgba(0, 0, 0, .4);
}

.dialog {
    width: 100%;
    max-width: 1280px;
    display: flex;
    background: #fff;
    border-radius: 4px;
    overflow: hidden;
    font-size: 13px;
    box-shadow: 0 0 8px rgba(0, 0, 0, .2), 0 32px 64px rgba(0, 0, 0, .24);
}

.categories, .subcategories {
    flex: none;
    background: #f4f4f4;
    border-right: 1px solid #eee;
    color: var(--text-soft);
}

.categories {
    width: 220px;
    padding: 15px 19px 15px 20px;
}

.categories h1, .settings-head h2 {
    font-size: 20px;
    line-height: 28px;
    font-weight: 600;
    color: var(--text);
}

.settings-search {
    height: 32px;
    display: flex;
    align-items: center;
    gap: 7px;
    margin: 13px 0 12px;
    padding: 0 8px;
    background: #fff;
    border: 1px solid #d1d1d1;
    border-bottom-color: #616161;
    border-radius: 4px;
    color: #616161;
}

.settings-search input {
    flex: 1;
}

.settings-search input::placeholder {
    color: #707070;
}

.categories a, .subcategories a {
    height: 32px;
    display: flex;
    align-items: center;
    position: relative;
}

.categories a {
    gap: 10px;
    padding-left: 2px;
}

.subcategories {
    width: 200px;
    padding: 18px 14px;
}

.categories .active, .subcategories .active {
    font-weight: 600;
    color: var(--text);
}

.hover::before, .categories .active::before, .subcategories .active::before {
    content: "";
    position: absolute;
    left: -10px;
    top: 8px;
    width: 3px;
    height: 16px;
    border-radius: 2px;
    background: var(--accent);
}

.subcategories .active::before {
    left: -12px;
}

.categories .hover::before {
    background: #c8c8c8;
}

.settings {
    flex: 1;
    min-width: 0;
}

.settings-head {
    height: 63px;
    display: flex;
    align-items: center;
    justify-content: space-between;
    padding: 2px 24px 0 20px;
    border-bottom: 1px solid #eee;
}

.settings-head svg {
    width: 16px;
    height: 16px;
    color: #666;
    stroke-width: 2;
}

.settings-body {
    display: flex;
    flex-direction: column;
    align-items: flex-start;
    padding: 14px 20px;
    line-height: 20px;
}

.settings-body p {
    color: #616161;
}

.switch {
    display: flex;
    align-items: center;
    gap: 12px;
    margin: 22px 0 16px 8px;
}

.switch input {
    appearance: none;
    width: 40px;
    height: 20px;
    margin: 0;
    padding: 2px;
    display: flex;
    justify-content: flex-end;
    border-radius: 10px;
    background: var(--accent);
}

.switch input::after {
    content: "";
    width: 16px;
    height: 16px;
    border-radius: 50%;
    background: #fff;
}

.field {
    width: 300px;
    height: 32px;
    padding: 0 12px;
    border: 1px solid #d1d1d1;
    border-bottom-color: #616161;
    border-radius: 4px;
}

.check {
    display: flex;
    gap: 8px;
    width: 300px;
    margin-top: 10px;
    color: var(--text-soft);
}

.check input {
    appearance: none;
    flex: none;
    width: 20px;
    height: 20px;
    margin: 0;
    display: flex;
    justify-content: center;
    border-radius: 2px;
    background: #00438a;
}

.check input::after {
    content: "";
    width: 6px;
    height: 11px;
    margin-top: 3px;
    border: solid #fff;
    border-width: 0 1px 1px 0;
    transform: rotate(45deg);
}

/* hidden folder names */
.folder-blur {
    position: absolute;
    left: 91px;
    top: 400px;
    bottom: 3px;
    width: 223px;
    background:
        linear-gradient(to bottom, transparent 94%, rgba(96, 102, 150, .5)),
        linear-gradient(to right, transparent 90%, rgba(185, 185, 185, .8)),
        radial-gradient(50% 5% at 75% 66%, rgba(118, 118, 118, .6), transparent),
        radial-gradient(50% 8% at 45% 49%, rgba(122, 122, 122, .5), transparent),
        radial-gradient(60% 24% at 40% 20%, rgba(122, 122, 122, .6), transparent),
        #878787;
}

/* windows taskbar */

.taskbar {
    height: 48px;
    flex: none;
    display: flex;
    align-items: center;
    gap: 4px;
    padding: 0 20px 1px 12px;
    border-top: 1px solid #2c3e9c;
    background: linear-gradient(to right, #374db6 0, #374db6 16%, #1f3ab2 21%, #1530ac 29%, #1629a8 35%, #1c39b0 41%, #1732b0 48%, #162ca0 57%, #1833b0 64%, #16299c 72%, #1a309f 75%, #364cb4 78%, #364cb4 100%);
    color: #fff;
}

.taskbar button {
    width: 40px;
    height: 40px;
    position: relative;
    border-radius: 4px;
}

.taskbar button.current {
    background: rgba(255, 255, 255, .08);
    border: 1px solid rgba(255, 255, 255, .08);
}

.taskbar svg {
    width: 24px;
    height: 24px;
}

.running::after {
    content: "";
    position: absolute;
    bottom: 1px;
    left: 17px;
    width: 6px;
    height: 3px;
    border-radius: 2px;
    background: #a9b2dc;
}

.current.running::after {
    left: 11px;
    width: 16px;
    background: #b8c8ff;
}

.count {
    position: absolute;
    top: 2px;
    right: 2px;
    width: 16px;
    height: 16px;
    border-radius: 50%;
    background: #c42b1c;
    font-size: 10px;
    line-height: 16px;
}

.clock {
    margin-left: auto;
    display: flex;
    flex-direction: column;
    text-align: right;
    line-height: 16px;
}
```
